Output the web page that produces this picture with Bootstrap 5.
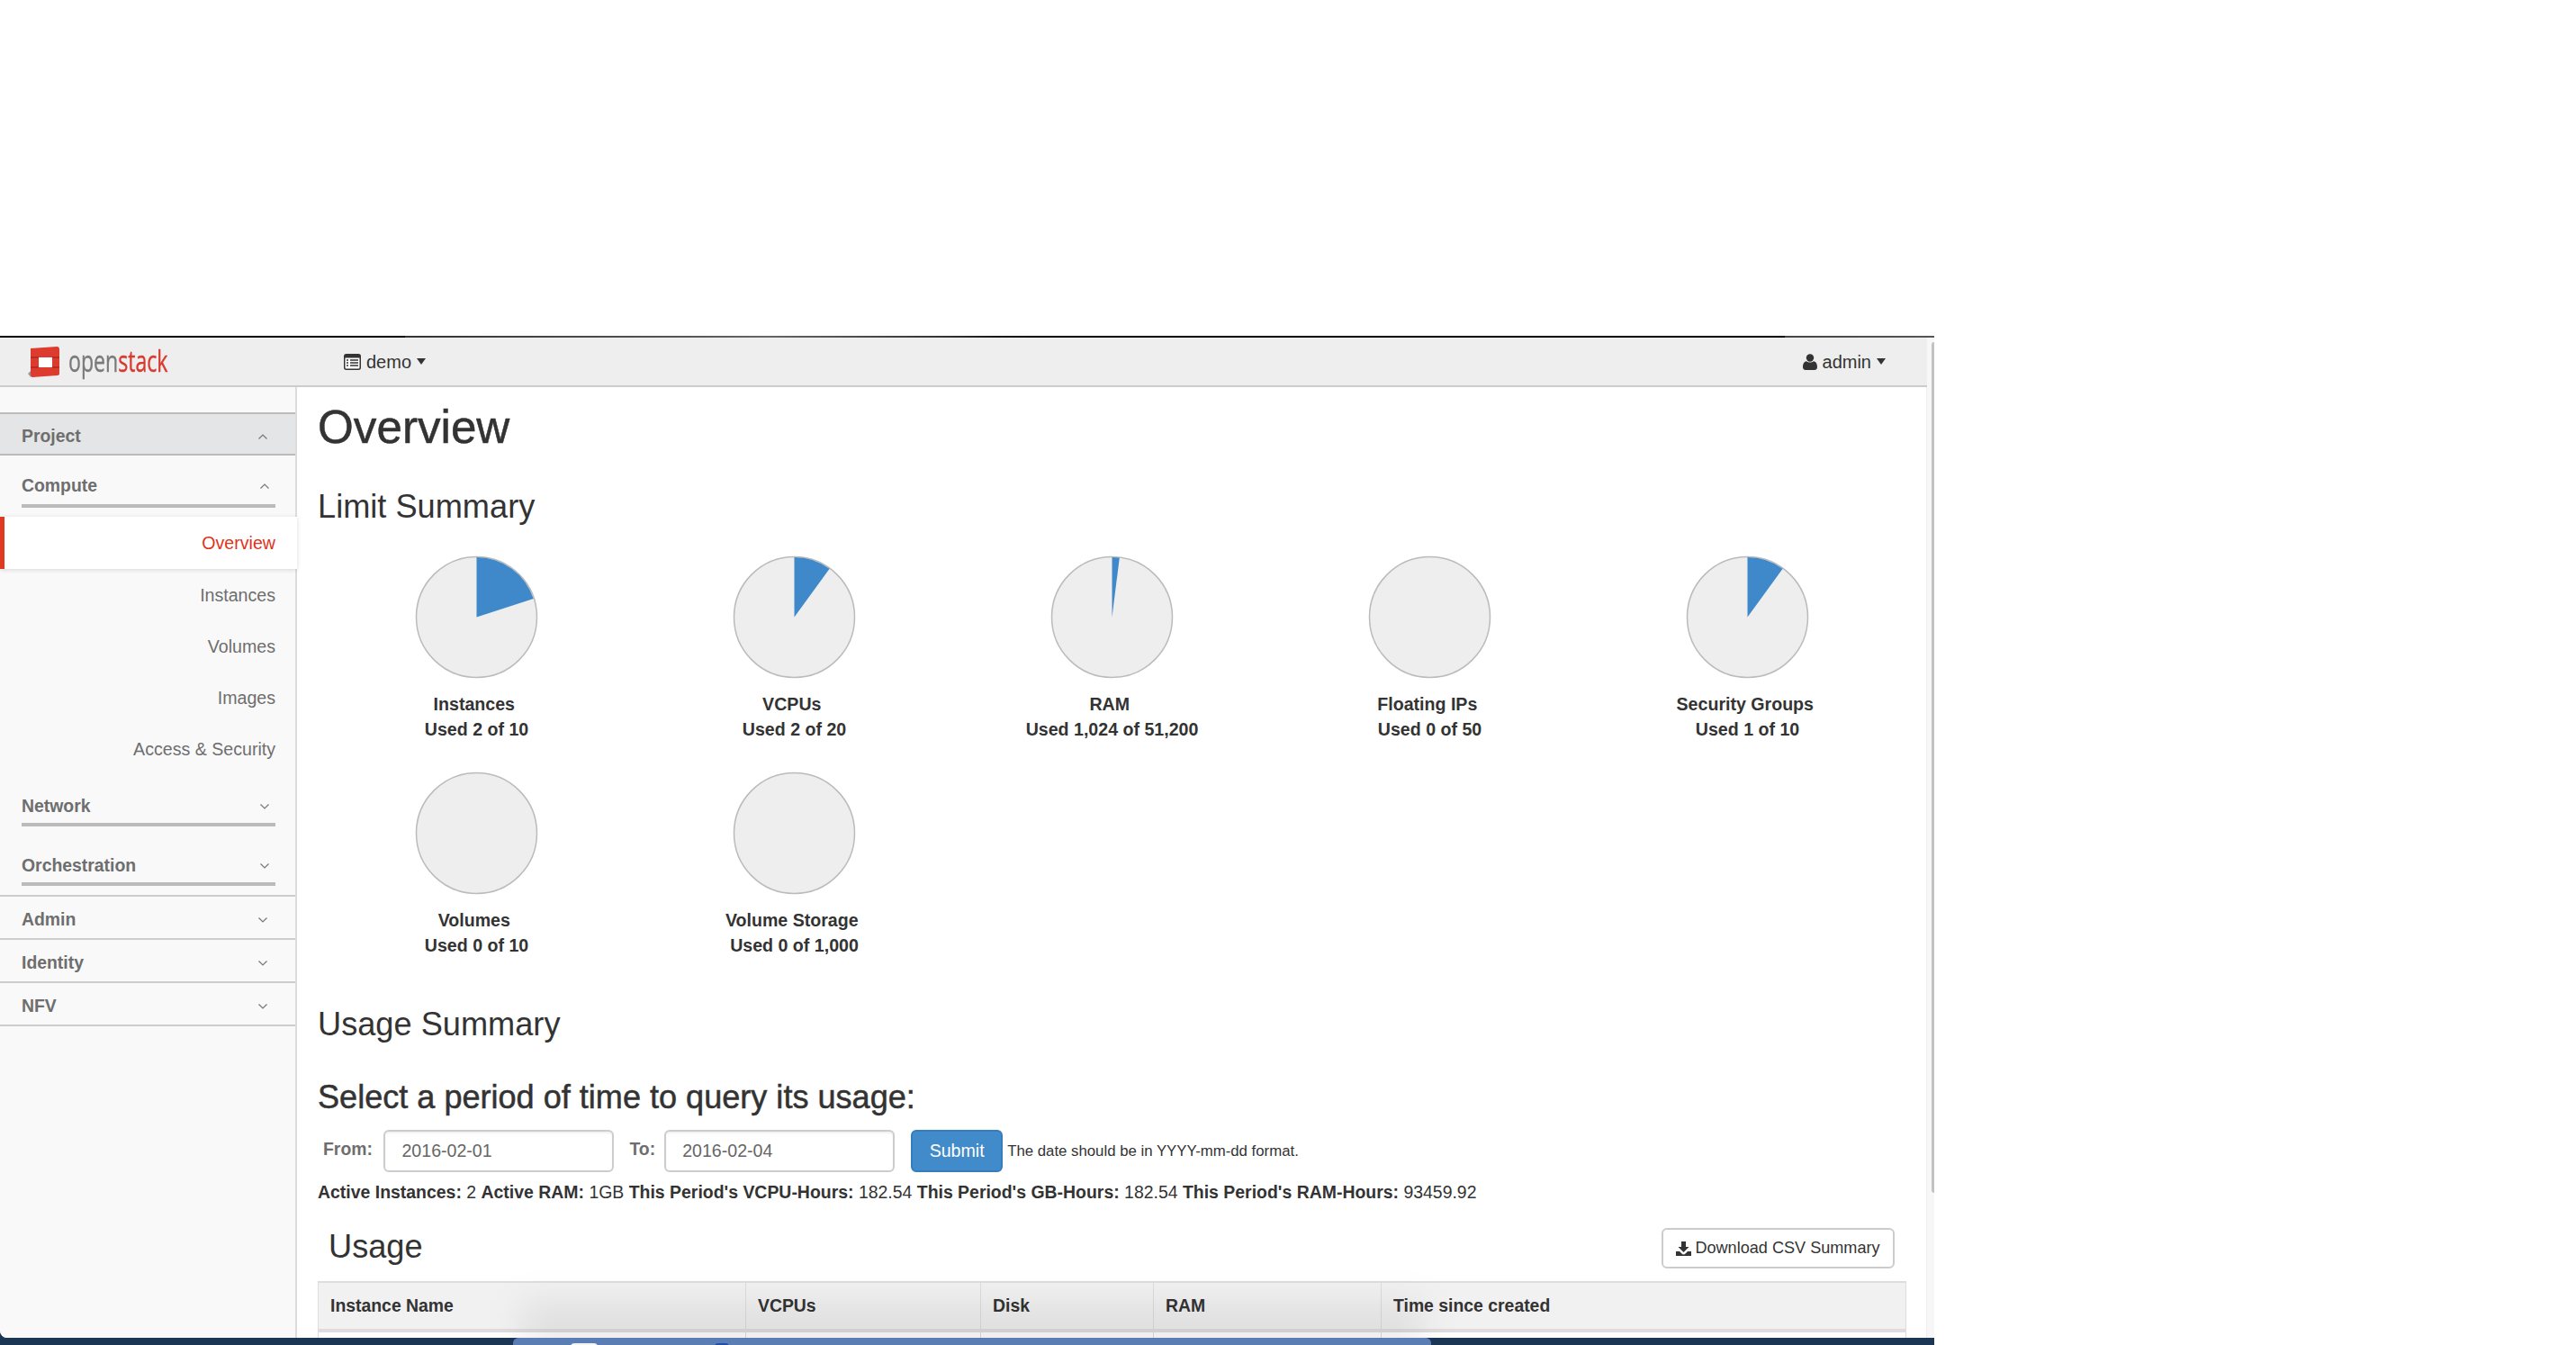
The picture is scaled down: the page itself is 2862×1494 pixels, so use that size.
<!doctype html>
<html lang="en">
<head>
<meta charset="utf-8">
<title>Overview</title>
<link href="https://cdn.jsdelivr.net/npm/bootstrap@5.3.0/dist/css/bootstrap.min.css" rel="stylesheet">
<style>
html,body{margin:0;height:100%;background:#fff;overflow:hidden}
body{font-family:"Liberation Sans",Arial,sans-serif;color:#333;font-size:19.6px}
.top-gap{height:373px;background:#fff}
.desk{width:2149px;height:1121px;background:#1b3555;position:relative;overflow:hidden}
.dock-bar{position:absolute;left:570px;width:1020px;top:1113px;height:8px;background:#5a7db3;border-radius:6px 6px 0 0;overflow:hidden}
.dock-a,.dock-b{position:absolute;top:6px;height:4px;border-radius:4px 4px 0 0}
.dock-a{left:64px;width:30px;background:#f4f4f4}
.dock-b{left:224px;width:16px;background:#1f4fa8;border-radius:8px 8px 0 0}
.win{width:2149px;height:1113px;background:#fff;overflow:hidden;position:relative;border-top:2px solid #000;border-image:linear-gradient(to right,#000 0,#000 450px,#333 450px,#555 760px,#666 850px,#333 1050px,#000 1150px,#000 1983px,#444 1983px,#555 2149px) 2 0 0 0;border-bottom-left-radius:8px;display:flex;flex-direction:column}
.topbar{height:55px;background:#eee;border-bottom:2px solid #ccc;margin-right:8px;flex:none;display:flex;align-items:center;position:relative}
.brand{width:382px;padding-left:31px;display:flex;align-items:center;gap:9px;flex:none}
.brand-word{font-family:"Open Sans",sans-serif;font-size:33px;font-weight:500;line-height:1;display:inline-block;transform:scaleX(.7);transform-origin:left center;color:#7a7a7a;width:110px;white-space:nowrap;position:relative;top:-1px;-webkit-text-stroke:.4px currentColor}
.brand-word b{font-weight:500;color:#d8392e}
.menu-btn{display:flex;align-items:center;color:#333;font-size:20px;gap:6px}
.menu-caret{width:0;height:0;border-left:5.5px solid transparent;border-right:5.5px solid transparent;border-top:7px solid #333;display:inline-block}
.user-menu{margin-left:auto;margin-right:46px}
.shell{display:flex;flex:1;min-height:0;padding-right:8px}
.side{width:330px;flex:none;background:#f9f9f9;border-right:2px solid #dcdcdc;padding-top:28px;color:#6e6e6e}
.side-head{font-weight:700;display:flex;justify-content:space-between;align-items:center;padding:0 24px 0 24px;font-size:19.4px}
.chev{width:12px;height:8px;flex:none;margin-right:6px}
.head-main{height:48px;padding-top:6px;background:#e4e5e6;border-top:2px solid #bbb;border-bottom:2px solid #bbb}
.head-sub{margin:0 22px 0 24px;padding:0;border-bottom:4px solid #bbb}
.h-compute{height:58px;padding-top:14px;margin-bottom:10px}
.h-net{height:58px;padding-top:17px}
.h-orch{height:66px;padding-top:25px;margin-bottom:10px}
.head-plain{height:48px;padding-top:5px;border-top:2px solid #ccc}
.head-last{border-bottom:2px solid #ccc;height:50px;margin-bottom:0}
.side-link{height:57px;padding-top:3px;display:flex;justify-content:flex-end;align-items:center;padding-right:22px;color:#6e6e6e;font-size:19.6px;text-decoration:none}
.side-on{height:58px;padding-top:1px;margin-right:-2px;padding-right:24px;background:#fff;color:#e0321c;border-left:5px solid #e0391f;box-shadow:0 1px 5px rgba(0,0,0,.14);position:relative}
.content{flex:1;padding-left:23px;padding-right:22px;border-right:1px solid #eee;width:0;position:relative}
.rail{width:8px;background:#f7f7f7;position:absolute;top:0;bottom:0;right:0}
.rail i{display:block;width:3px;height:945px;background:#c2c2c2;border-radius:3px 0 0 3px;margin:5px 0 0 5px}
.h-page{font-size:51.2px;font-weight:500;margin:15px 0 0;line-height:60px;color:#333;-webkit-text-stroke:.5px #333}
.h-sec{font-size:36.2px;font-weight:400;line-height:42px;margin:37px 0 0;color:#333}
.pie-grid{display:grid;grid-template-columns:repeat(5,353px);row-gap:0;margin-top:33px}
.pie-cell{height:240px;text-align:center;font-weight:700;line-height:28px;color:#333}
.pie-cell svg{display:block;margin:0 auto 14px;width:137px;height:137px}
.pie-t{white-space:pre}
.h-sec.grid-next{margin-top:20px}
.h-select{font-size:36.1px;font-weight:500;line-height:42px;margin:39px 0 0;color:#333;-webkit-text-stroke:.5px #333}
.q-form{display:flex;align-items:center;margin-top:15px;height:47px}
.q-label{font-weight:700;color:#6e6e6e;font-size:19.4px;position:relative;top:-2px}
.q-from{margin:0 12.5px 0 6px}
.q-to{margin:0 10px 0 17px}
.q-input.form-control{width:256px;height:47px;font-size:19.6px;padding:0 18px;color:#666;border:2px solid #ccc;border-radius:6px;box-shadow:inset 0 2px 2px rgba(0,0,0,.06);font-family:inherit}
.q-sub.btn{background:#428bca;border:2px solid #357ebd;color:#fff;width:102px;height:47px;font-size:19.6px;padding:0;border-radius:6px;margin-left:18px}
.q-help{font-size:16.8px;margin-left:5px;color:#333}
.stats{margin-top:10px;line-height:24px;white-space:nowrap;font-size:19.45px}
.usage-row{display:flex;justify-content:space-between;align-items:center;height:45px;margin-top:28px;padding:0 13px 0 12px}
.usage-t{font-size:36.2px;font-weight:400;margin:0 0 4px;line-height:42px;color:#333}
.csv.btn{height:45px;width:259px;font-size:18.1px;background:#fff;border:2px solid #ccc;border-radius:6px;color:#333;padding:0;display:flex;align-items:center;justify-content:center;gap:4px}
.tbl.table{margin-top:14px;border-color:#ddd;width:1765px;table-layout:fixed;font-size:19.4px;margin-bottom:0}
.tbl th{background:#f1f1f1;height:54px;padding:0 13px;vertical-align:middle;border:1px solid #ddd;border-top-width:2px;border-bottom:4px solid #ddd;color:#333;box-shadow:none}
.tbl td{height:40px;border:1px solid #ddd;background:#fff}
.dock-shade{position:absolute;left:250px;width:1000px;bottom:-22px;height:62px;background:rgba(0,0,0,.07);filter:blur(20px);pointer-events:none}
</style>
</head>
<body>
<div class="top-gap"></div>
<div class="desk">
  <div class="win">
    <div class="topbar">
      <div class="brand">
        <svg width="36" height="35" viewBox="0 0 36 35" aria-hidden="true"><path d="M3 3L32 1q3 0 3 3V31q0 2-2 2L5 35q-2 0-2-2z" fill="#dc3b2e"/><path d="M12 13h15v11H12z" fill="#fff"/><path d="M3 13h9M3 24h9M27 13h8M27 24h8" stroke="#a82a22" stroke-width="1.500"/><path d="M3 28L0 31l3 4z" fill="#9a9a9a"/></svg>
        <span class="brand-word">open<b>stack</b></span>
      </div>
      <div class="menu-btn">
        <svg width="19" height="18" viewBox="0 0 19 18" aria-hidden="true"><rect x=".75" y=".75" width="17.5" height="16.5" rx="2" fill="#fff" stroke="#333" stroke-width="1.5"/><rect x="1" y="1" width="17" height="3.5" fill="#333"/><path d="M3 7h2M7 7h9M3 10h2M7 10h9M3 13h2M7 13h9" stroke="#333" stroke-width="1.5"/></svg>
        <span>demo</span><span class="menu-caret"></span>
      </div>
      <div class="menu-btn user-menu">
        <svg width="16" height="18" viewBox="0 0 16 18" aria-hidden="true"><circle cx="8" cy="4.5" r="4.2" fill="#333"/><path d="M0 15c0-5 2-6.500 4-6.800 1 .8 2.500 1.300 4 1.300s3-.5 4-1.300c2 .3 4 1.800 4 6.800 0 2-1.500 3-3 3H3c-1.500 0-3-1-3-3z" fill="#333"/></svg>
        <span>admin</span><span class="menu-caret"></span>
      </div>
    </div>
    <div class="shell">
      <nav class="side">
        <div class="side-head head-main"><span>Project</span><svg class="chev" viewBox="0 0 12 8"><path d="M1.500 6.500L6 2l4.500 4.500" fill="none" stroke="#777" stroke-width="1.200"/></svg></div>
        <div class="side-head head-sub h-compute"><span>Compute</span><svg class="chev" viewBox="0 0 12 8"><path d="M1.500 6.500L6 2l4.500 4.500" fill="none" stroke="#777" stroke-width="1.200"/></svg></div>
        <a class="side-link side-on" href="#">Overview</a>
        <a class="side-link" href="#">Instances</a>
        <a class="side-link" href="#">Volumes</a>
        <a class="side-link" href="#">Images</a>
        <a class="side-link" href="#">Access &amp; Security</a>
        <div class="side-head head-sub h-net"><span>Network</span><svg class="chev" viewBox="0 0 12 8"><path d="M1.500 1.500L6 6l4.500-4.500" fill="none" stroke="#777" stroke-width="1.200"/></svg></div>
        <div class="side-head head-sub h-orch"><span>Orchestration</span><svg class="chev" viewBox="0 0 12 8"><path d="M1.500 1.500L6 6l4.500-4.500" fill="none" stroke="#777" stroke-width="1.200"/></svg></div>
        <div class="side-head head-plain"><span>Admin</span><svg class="chev" viewBox="0 0 12 8"><path d="M1.500 1.500L6 6l4.500-4.500" fill="none" stroke="#777" stroke-width="1.200"/></svg></div>
        <div class="side-head head-plain"><span>Identity</span><svg class="chev" viewBox="0 0 12 8"><path d="M1.500 1.500L6 6l4.500-4.500" fill="none" stroke="#777" stroke-width="1.200"/></svg></div>
        <div class="side-head head-plain head-last"><span>NFV</span><svg class="chev" viewBox="0 0 12 8"><path d="M1.500 1.500L6 6l4.500-4.500" fill="none" stroke="#777" stroke-width="1.200"/></svg></div>
      </nav>
      <main class="content">
        <h1 class="h-page">Overview</h1>
        <h2 class="h-sec">Limit Summary</h2>
        <div class="pie-grid">
          <div class="pie-cell"><svg viewBox="0 0 137 137"><circle cx="68.500" cy="68.500" r="67" fill="#eee" stroke="#bbb" stroke-width="1.500"/><path d="M68.500 68.500V2A66.500 66.500 0 0 1 131.700 47.900Z" fill="#3f88c9"/></svg><span class="pie-t">Instances&nbsp;</span><br>Used 2 of 10</div>
          <div class="pie-cell"><svg viewBox="0 0 137 137"><circle cx="68.500" cy="68.500" r="67" fill="#eee" stroke="#bbb" stroke-width="1.500"/><path d="M68.500 68.500V2A66.500 66.500 0 0 1 107.600 14.700Z" fill="#3f88c9"/></svg><span class="pie-t">VCPUs&nbsp;</span><br>Used 2 of 20</div>
          <div class="pie-cell"><svg viewBox="0 0 137 137"><circle cx="68.500" cy="68.500" r="67" fill="#eee" stroke="#bbb" stroke-width="1.500"/><path d="M68.500 68.500V2A66.500 66.500 0 0 1 76.800 2.500Z" fill="#3f88c9"/></svg><span class="pie-t">RAM&nbsp;</span><br>Used 1,024 of 51,200</div>
          <div class="pie-cell"><svg viewBox="0 0 137 137"><circle cx="68.500" cy="68.500" r="67" fill="#eee" stroke="#bbb" stroke-width="1.500"/></svg><span class="pie-t">Floating IPs&nbsp;</span><br>Used 0 of 50</div>
          <div class="pie-cell"><svg viewBox="0 0 137 137"><circle cx="68.500" cy="68.500" r="67" fill="#eee" stroke="#bbb" stroke-width="1.500"/><path d="M68.500 68.500V2A66.500 66.500 0 0 1 107.600 14.700Z" fill="#3f88c9"/></svg><span class="pie-t">Security Groups&nbsp;</span><br>Used 1 of 10</div>
          <div class="pie-cell"><svg viewBox="0 0 137 137"><circle cx="68.500" cy="68.500" r="67" fill="#eee" stroke="#bbb" stroke-width="1.500"/></svg><span class="pie-t">Volumes&nbsp;</span><br>Used 0 of 10</div>
          <div class="pie-cell"><svg viewBox="0 0 137 137"><circle cx="68.500" cy="68.500" r="67" fill="#eee" stroke="#bbb" stroke-width="1.500"/></svg><span class="pie-t">Volume Storage&nbsp;</span><br>Used 0 of 1,000</div>
        </div>
        <h2 class="h-sec grid-next">Usage Summary</h2>
        <h3 class="h-select">Select a period of time to query its usage:</h3>
        <form class="q-form">
          <label class="q-label q-from">From:</label>
          <input class="form-control q-input" value="2016-02-01">
          <label class="q-label q-to">To:</label>
          <input class="form-control q-input" value="2016-02-04">
          <button type="button" class="btn q-sub">Submit</button>
          <span class="q-help">The date should be in YYYY-mm-dd format.</span>
        </form>
        <p class="stats mb-0"><strong>Active Instances:</strong> 2 <strong>Active RAM:</strong> 1GB <strong>This Period's VCPU-Hours:</strong> 182.54 <strong>This Period's GB-Hours:</strong> 182.54 <strong>This Period's RAM-Hours:</strong> 93459.92</p>
        <div class="usage-row">
          <h2 class="usage-t">Usage</h2>
          <button type="button" class="btn csv"><svg width="17" height="16" viewBox="0 0 17 16" aria-hidden="true"><path d="M6 0h5v6h3.500L8.500 12 2.500 6H6z" fill="#333"/><path d="M0 11h4l2.500 2.500a3 3 0 0 0 4 0L13 11h4v5H0z" fill="#333"/></svg><span>Download CSV Summary</span></button>
        </div>
        <table class="table tbl">
          <colgroup><col style="width:475px"><col style="width:261px"><col style="width:192px"><col style="width:253px"><col></colgroup>
          <thead><tr><th>Instance Name</th><th>VCPUs</th><th>Disk</th><th>RAM</th><th>Time since created</th></tr></thead>
          <tbody><tr><td></td><td></td><td></td><td></td><td></td></tr></tbody>
        </table>
        <div class="dock-shade"></div>
      </main>
    </div>
    <div class="rail"><i></i></div>
  </div>
  <div class="dock-bar"><span class="dock-a"></span><span class="dock-b"></span></div>
</div>
</body>
</html>
